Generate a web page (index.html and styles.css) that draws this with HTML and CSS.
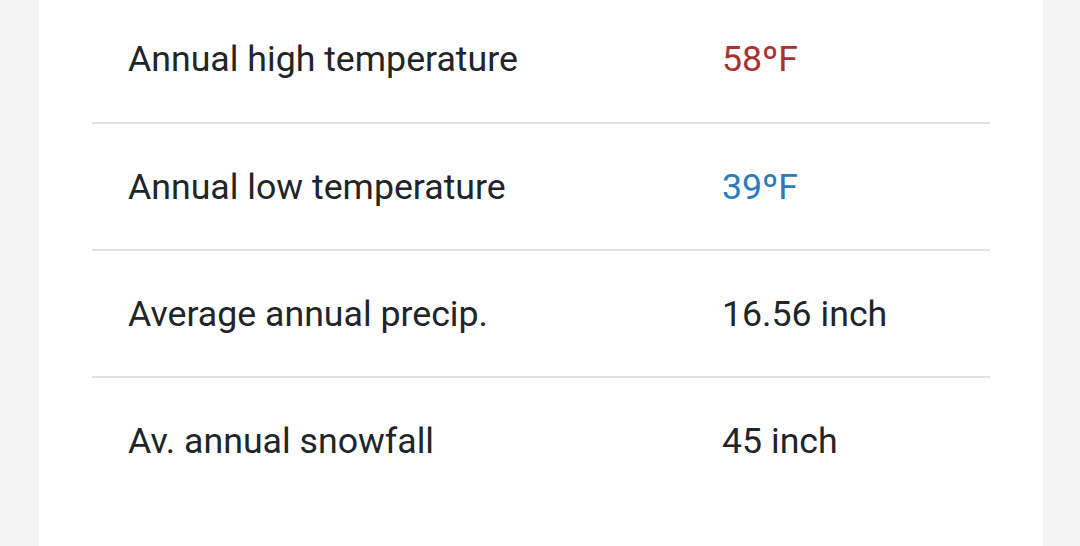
FILE: index.html
```html
<!DOCTYPE html>
<html lang="en">
<head>
    <meta charset="UTF-8">
    <meta name="viewport" content="width=device-width, initial-scale=1.0">
    <title>Climate</title>
    <link rel="stylesheet" href="styles.css">
</head>
<body>
    <div class="card">
        <table class="climate-table">
            <tbody>
                <tr>
                    <td>Annual high temperature</td>
                    <td class="value temp-high">58ºF</td>
                </tr>
                <tr>
                    <td>Annual low temperature</td>
                    <td class="value temp-low">39ºF</td>
                </tr>
                <tr>
                    <td>Average annual precip.</td>
                    <td class="value">16.56 inch</td>
                </tr>
                <tr>
                    <td>Av. annual snowfall</td>
                    <td class="value">45 inch</td>
                </tr>
            </tbody>
        </table>
    </div>
</body>
</html>
```

FILE: styles.css
```css
* {
    margin: 0;
    padding: 0;
    box-sizing: border-box;
}

body {
    font-family: Roboto, "Noto Sans", sans-serif;
    background: #f4f4f4;
    color: #212529;
}

.card {
    background: white;
    margin-left: 39px;
    width: 1004px;
    min-height: 560px;
    padding: 0 53px;
    margin-top: -4px;
}

.climate-table {
    width: 100%;
    border-collapse: collapse;
    font-size: 35.7px;
}

.climate-table td {
    height: 127px;
    padding: 0 0 0 36px;
    vertical-align: middle;
    border-bottom: 2px solid #dee2e6;
}

.climate-table td:first-child {
    width: 630px;
}

.climate-table td.value {
    padding-left: 0;
}

.climate-table tr:last-child td {
    border-bottom: none;
}

.temp-high {
    color: #a83232;
}

.temp-low {
    color: #2a7bba;
}
```
